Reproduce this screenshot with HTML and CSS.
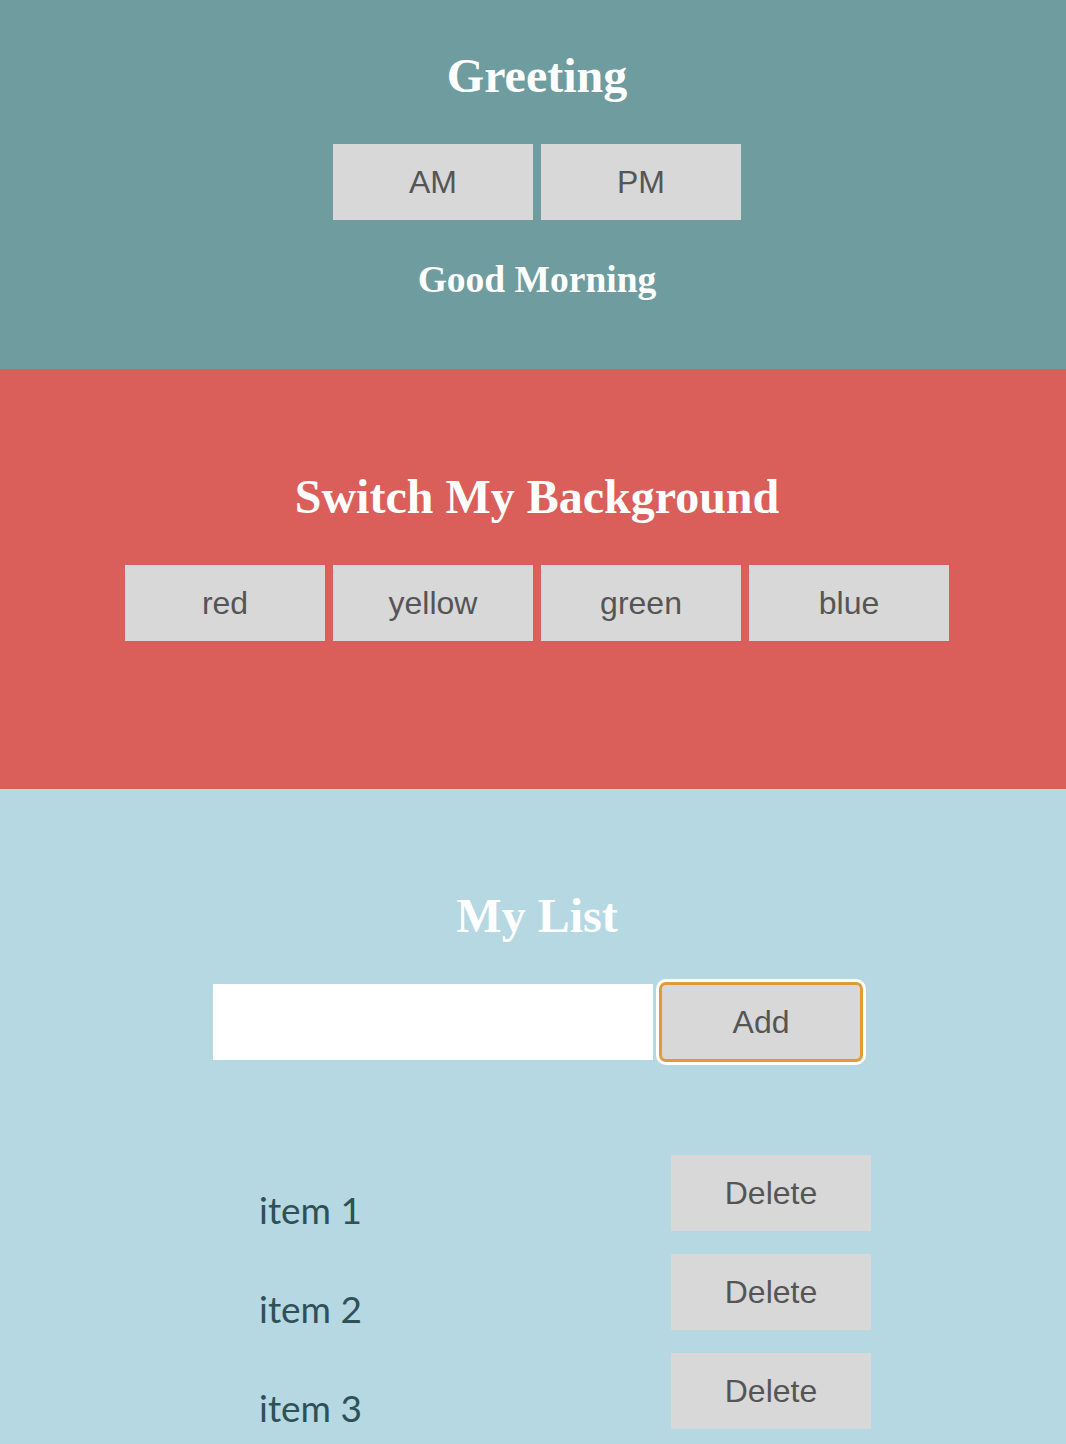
FILE: index.html
```html
<!DOCTYPE html>
<html>
<head>
<meta charset="utf-8">
<link rel="stylesheet" href="styles.css">
</head>
<body>
<section class="panel greeting">
  <h1 class="title">Greeting</h1>
  <div class="btn-row">
    <button class="btn">AM</button>
    <button class="btn">PM</button>
  </div>
  <h2 class="message">Good Morning</h2>
</section>
<section class="panel switcher">
  <h1 class="title">Switch My Background</h1>
  <div class="btn-row">
    <button class="btn">red</button>
    <button class="btn">yellow</button>
    <button class="btn">green</button>
    <button class="btn">blue</button>
  </div>
</section>
<section class="panel list">
  <h1 class="title">My List</h1>
  <div class="add-row">
    <input class="add-input" type="text">
    <button class="btn btn-add">Add</button>
  </div>
  <ul class="items">
    <li class="item"><span class="item-text">item 1</span><button class="btn">Delete</button></li>
    <li class="item"><span class="item-text">item 2</span><button class="btn">Delete</button></li>
    <li class="item"><span class="item-text">item 3</span><button class="btn">Delete</button></li>
  </ul>
</section>
</body>
</html>
```
FILE: styles.css
```css
html, body {
  margin: 0;
  padding: 0;
}
body {
  font-family: "Liberation Serif", serif;
  background: #b6d8e3;
}
.panel {
  display: flex;
  flex-direction: column;
  align-items: center;
  padding-left: 8px;
}
.title {
  margin: 0;
  font-family: "Liberation Serif", serif;
  font-weight: bold;
  font-size: 48px;
  line-height: 56px;
  color: #ffffff;
}
.greeting {
  background: #6e9c9f;
  height: 369px;
  padding-top: 48px;
  box-sizing: border-box;
}
.switcher {
  background: #da5e5a;
  height: 420px;
  padding-top: 100px;
  box-sizing: border-box;
}
.list {
  background: #b6d8e3;
  min-height: 655px;
  padding-top: 99px;
  box-sizing: border-box;
}
.btn-row {
  display: flex;
  gap: 8px;
  margin-top: 40px;
}
.btn {
  width: 200px;
  height: 76px;
  border: none;
  border-radius: 0;
  background: #d8d8d8;
  color: #555555;
  font-family: "Liberation Sans", Arial, sans-serif;
  font-size: 32px;
  padding: 0;
  margin: 0;
}
.message {
  margin: 38px 0 0;
  font-family: "Liberation Serif", serif;
  font-weight: bold;
  font-size: 37.5px;
  line-height: 44px;
  color: #ffffff;
}
.add-row {
  display: flex;
  margin-top: 40px;
}
.add-input {
  width: 440px;
  height: 76px;
  border: none;
  padding: 0;
  margin: 0;
  background: #ffffff;
  box-sizing: border-box;
}
.btn-add {
  margin-left: 8px;
  border-radius: 5px;
  outline: 3px solid #e09a38;
  outline-offset: -1px;
  box-shadow: 0 0 0 5px #ffffff;
}
.items {
  list-style: none;
  margin: 95px 0 0;
  padding: 0;
  width: 612px;
  align-self: flex-start;
  margin-left: calc(50% - 278px);
  display: flex;
  flex-direction: column;
  gap: 23px;
}
.item {
  display: flex;
  justify-content: space-between;
  align-items: flex-end;
}
.item-text {
  font-family: "Lato", "Open Sans", sans-serif;
  font-size: 37px;
  line-height: 1;
  color: #2f5056;
  padding-bottom: 3px;
}
```
